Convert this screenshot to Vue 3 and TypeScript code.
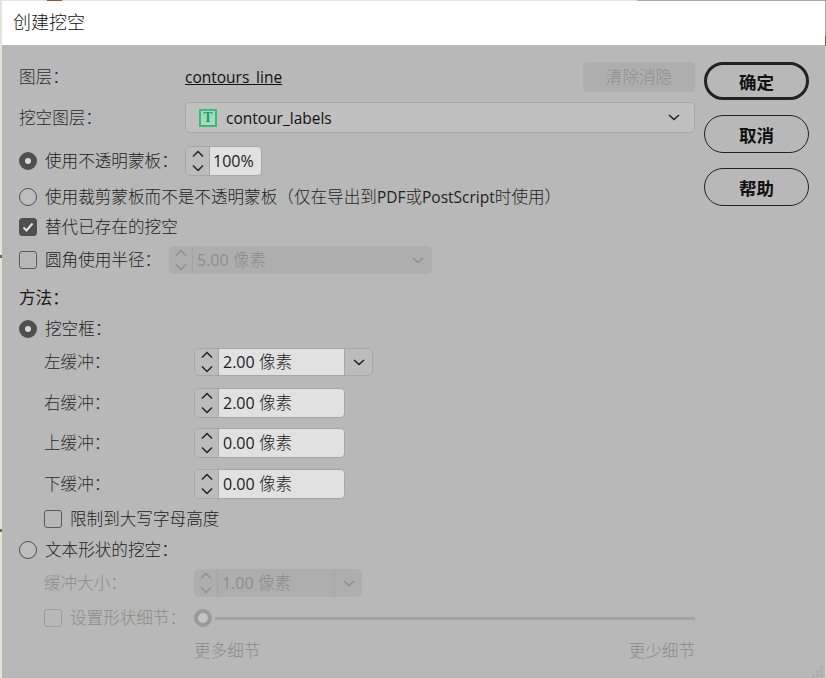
<script setup lang="ts">
const COLON = '\uFF1A'
const buffers = [
  { label: '右缓冲' + COLON, value: '2.00', cls: 'r-right' },
  { label: '上缓冲' + COLON, value: '0.00', cls: 'r-top' },
  { label: '下缓冲' + COLON, value: '0.00', cls: 'r-bottom' },
]
const gripDots = [
  [8, 0],
  [4, 4], [8, 4],
  [0, 8], [4, 8], [8, 8],
]
</script>

<template>
  <div class="screen">
    <div class="window">
      <header class="title">创建挖空</header>
      <div class="body">
        <main class="form">
          <div class="row r-layer">
            <span class="label-main">图层&#xFF1A;</span>
            <span class="layer-name latin">contours_line</span>
            <button class="clear">清除消隐</button>
          </div>
          <div class="row r-knock">
            <span class="label-main">挖空图层&#xFF1A;</span>
            <div class="combo">
              <span class="t-icon">T</span>
              <span class="combo-text latin">contour_labels</span>
              <svg class="chev combo-chev" viewBox="0 0 12 7"><path d="M1 1l5 4.500L11 1" /></svg>
            </div>
          </div>
          <div class="row r-opacity">
            <span class="radio on"></span>
            <span class="opt-label">使用不透明蒙板&#xFF1A;</span>
            <div class="spin spin-pct">
              <span class="steppers">
                <svg viewBox="0 0 14 26"><path d="M2 8.500l5-5 5 5M2 17.500l5 5 5-5" /></svg>
              </span>
              <span class="spin-value"><span class="num">100%</span></span>
            </div>
          </div>
          <div class="row r-clip">
            <span class="radio"></span>
            <span class="opt-label">使用裁剪蒙板而不是不透明蒙板&#xFF08;仅在导出到<span class="latin">PDF</span>或<span class="latin">PostScript</span>时使用&#xFF09;</span>
          </div>
          <div class="row r-replace">
            <span class="check on">
              <svg viewBox="0 0 16 16"><path d="M3.500 8.500l3 3 6-7" /></svg>
            </span>
            <span class="opt-label">替代已存在的挖空</span>
          </div>
          <div class="row r-round">
            <span class="check"></span>
            <span class="opt-label">圆角使用半径&#xFF1A;</span>
            <div class="spin spin-disabled spin-round">
              <span class="steppers">
                <svg viewBox="0 0 14 26"><path d="M2 8.500l5-5 5 5M2 17.500l5 5 5-5" /></svg>
              </span>
              <span class="spin-value"><span class="num">5.00</span> 像素</span>
              <svg class="chev disabled-chev" viewBox="0 0 12 7"><path d="M1 1l5 4.500L11 1" /></svg>
            </div>
          </div>
          <div class="row r-method"><span class="method">方法&#xFF1A;</span></div>
          <div class="row r-frame">
            <span class="radio on"></span>
            <span class="opt-label">挖空框&#xFF1A;</span>
          </div>
          <div class="row indent r-left">
            <span class="sub-label">左缓冲&#xFF1A;</span>
            <div class="spin spin-unit">
              <span class="steppers">
                <svg viewBox="0 0 14 26"><path d="M2 8.500l5-5 5 5M2 17.500l5 5 5-5" /></svg>
              </span>
              <span class="spin-value"><span class="num">2.00</span> 像素</span>
              <span class="unit-drop">
                <svg class="chev" viewBox="0 0 12 7"><path d="M1 1l5 4.500L11 1" /></svg>
              </span>
            </div>
          </div>
          <div v-for="b in buffers" :key="b.label" class="row indent" :class="b.cls">
            <span class="sub-label">{{ b.label }}</span>
            <div class="spin spin-plain">
              <span class="steppers">
                <svg viewBox="0 0 14 26"><path d="M2 8.500l5-5 5 5M2 17.500l5 5 5-5" /></svg>
              </span>
              <span class="spin-value"><span class="num">{{ b.value }}</span> 像素</span>
            </div>
          </div>
          <div class="row indent r-cap">
            <span class="check"></span>
            <span class="opt-label">限制到大写字母高度</span>
          </div>
          <div class="row r-shape">
            <span class="radio"></span>
            <span class="opt-label">文本形状的挖空&#xFF1A;</span>
          </div>
          <div class="row indent r-size">
            <span class="sub-label muted">缓冲大小&#xFF1A;</span>
            <div class="spin spin-disabled spin-size">
              <span class="steppers">
                <svg viewBox="0 0 14 26"><path d="M2 8.500l5-5 5 5M2 17.500l5 5 5-5" /></svg>
              </span>
              <span class="spin-value"><span class="num">1.00</span> 像素</span>
              <span class="unit-drop">
                <svg class="chev disabled-chev" viewBox="0 0 12 7"><path d="M1 1l5 4.500L11 1" /></svg>
              </span>
            </div>
          </div>
          <div class="row indent r-detail">
            <span class="check muted-box"></span>
            <span class="opt-label muted detail-label">设置形状细节&#xFF1A;</span>
            <div class="slider">
              <span class="thumb"></span>
              <span class="track"></span>
            </div>
          </div>
          <div class="row r-ends">
            <span>更多细节</span>
            <span>更少细节</span>
          </div>
        </main>
        <aside class="actions">
          <button class="action default">确定</button>
          <button class="action">取消</button>
          <button class="action">帮助</button>
        </aside>
        <svg class="grip" viewBox="0 0 11 11">
          <rect v-for="d in gripDots" :key="d.join()" :x="d[0]" :y="d[1]" width="3" height="3" />
        </svg>
      </div>
    </div>
  </div>
</template>

<style>
html, body { margin: 0; background: #e4e4da; }
</style>

<style scoped>
.screen {
  width: 826px;
  height: 678px;
  overflow: hidden;
  background:
    linear-gradient(to right, #e4e4da 0 47px, #8a5a2a 47px 62px, #e4e4da 62px 637px, #a8a8a8 637px) top / 100% 1px no-repeat,
    linear-gradient(to bottom, #a8a8a8 0 36px, #8a5a2a 36px 46px, #d8d8d8 46px) right / 1px 100% no-repeat,
    linear-gradient(to bottom, #e4e4da 0 255px, #8a5a2a 255px 258px, #e4e4da 258px 529px, #8a5a2a 529px 532px, #e4e4da 532px) left / 2px 100% no-repeat,
    #e4e4da;
  font-family: "Open Sans", "Noto Sans CJK SC", sans-serif;
  font-size: 16.6px;
  font-weight: 300;
  color: #222;
}
.window {
  width: 823px;
  height: 677px;
  margin: 1px 0 0 2px;
  display: flex;
  flex-direction: column;
}
.title {
  height: 44px;
  flex: none;
  background: #fff;
  padding-left: 11px;
  font-size: 18px;
  line-height: 43px;
  color: #111;
}
.body {
  flex: 1;
  display: flex;
  background: #b8b8b8;
  padding-top: 17px;
  position: relative;
}
.form {
  width: 676px;
  margin-left: 17px;
  flex: none;
  display: flex;
  flex-direction: column;
}
.latin { font-size: 15.5px; font-weight: 400; }
.num { font-size: 16px; font-weight: 400; }
.row { display: flex; align-items: center; flex: none; line-height: 22px; }
.indent { padding-left: 25px; }
.label-main { width: 166px; flex: none; color: #2b2b2b; }
.r-layer { height: 30px; }
.r-knock { height: 31px; margin-top: 10px; }
.r-opacity { height: 30px; margin-top: 13px; }
.r-clip { height: 30px; margin-top: 6px; }
.r-replace { height: 30px; }
.r-round { height: 28px; margin-top: 4px; }
.r-method { height: 24px; margin-top: 12px; }
.r-frame { height: 24px; margin-top: 7px; }
.r-left { height: 28px; margin-top: 7px; }
.r-right { height: 30px; margin-top: 12px; }
.r-top { height: 30px; margin-top: 10px; }
.r-bottom { height: 30px; margin-top: 11px; }
.r-cap { height: 24px; margin-top: 8px; }
.r-shape { height: 24px; margin-top: 7px; }
.r-size { height: 28px; margin-top: 7px; }
.r-detail { height: 28px; margin-top: 7px; }
.r-ends { height: 24px; margin-top: 7px; padding-left: 175px; justify-content: space-between; color: #8c8c8c; }

.method { color: #1a1a1a; font-weight: 400; }
.layer-name { text-decoration: underline; color: #111; }
.clear {
  margin-left: auto;
  width: 112px;
  height: 30px;
  border: 0;
  border-radius: 4px;
  background: #aeaeae;
  color: #8e8e8e;
  font: inherit;
  padding: 0;
}
.combo {
  flex: 1;
  height: 31px;
  box-sizing: border-box;
  border: 1px solid #a6a6a6;
  border-radius: 5px;
  background: #c0c0c0;
  display: flex;
  align-items: center;
  padding: 0 14px 0 13px;
  color: #111;
}
.t-icon {
  width: 18px;
  height: 18px;
  box-sizing: border-box;
  border: 2px solid #3cb878;
  background: #a5dcc0;
  color: #1f9e62;
  font: 700 14px/14px "Liberation Serif", serif;
  text-align: center;
  flex: none;
}
.combo-text { margin-left: 9px; }
.combo-chev { margin-left: auto; }
.chev { width: 12px; height: 7px; flex: none; fill: none; stroke: #222; stroke-width: 1.6; }
.disabled-chev { stroke: #8e8e8e; }

.radio {
  width: 18px;
  height: 18px;
  box-sizing: border-box;
  border: 1.500px solid #4f4f4f;
  border-radius: 50%;
  flex: none;
  margin-right: 8px;
  background: #bdbdbd;
}
.radio.on { background: #d8d8d8; border: 6px solid #4f4f4f; }
.check {
  width: 18px;
  height: 18px;
  box-sizing: border-box;
  border: 1px solid #5a5a5a;
  border-radius: 3px;
  flex: none;
  margin-right: 8px;
}
.check.on { background: #4f4f4f; border-color: #4f4f4f; }
.check svg { display: block; width: 16px; height: 16px; fill: none; stroke: #e4e4e4; stroke-width: 2; }
.muted-box { border-color: #9c9c9c; }
.opt-label { color: #222; white-space: nowrap; }
.r-opacity .opt-label { width: 140px; flex: none; }
.r-round .opt-label { width: 124px; flex: none; }
.sub-label { width: 150px; flex: none; color: #2b2b2b; }
.muted { color: #8c8c8c; }
.detail-label { width: 124px; flex: none; }

.spin {
  display: flex;
  align-items: stretch;
  height: 30px;
  box-sizing: border-box;
  border: 1px solid #a6a6a6;
  border-radius: 5px;
  overflow: hidden;
}
.steppers {
  width: 23px;
  flex: none;
  border-right: 1px solid #a6a6a6;
  background: #bcbcbc;
  display: flex;
  align-items: center;
  justify-content: center;
}
.steppers svg { width: 14px; height: 26px; fill: none; stroke: #222; stroke-width: 1.5; }
.spin-value { flex: 1; background: #e1e1e1; padding-left: 4px; line-height: 28px; color: #1c1c1c; }
.spin-pct { width: 77px; }
.spin-pct .spin-value { padding-left: 3px; }
.spin-plain { width: 151px; }
.spin-unit { width: 179px; height: 28px; }
.spin-unit .spin-value { line-height: 26px; }
.unit-drop {
  width: 27px;
  flex: none;
  border-left: 1px solid #a6a6a6;
  background: #bcbcbc;
  display: flex;
  align-items: center;
  justify-content: center;
}
.spin-disabled { border: 0; background: #aeaeae; height: 28px; }
.spin-disabled .steppers { background: transparent; border-right-color: #a2a2a2; }
.spin-disabled .steppers svg { stroke: #8e8e8e; }
.spin-disabled .spin-value { background: transparent; color: #8c8c8c; line-height: 28px; }
.spin-disabled .unit-drop { background: transparent; border-left-color: #a6a6a6; }
.spin-round { width: 263px; }
.spin-round .disabled-chev { align-self: center; margin-right: 8px; }
.spin-size { width: 168px; }

.slider { flex: 1; display: flex; align-items: center; }
.thumb {
  width: 18px;
  height: 18px;
  box-sizing: border-box;
  border: 4px solid #9a9a9a;
  border-radius: 50%;
  background: #c4c4c4;
  flex: none;
}
.track { flex: 1; height: 3px; margin-left: 3px; background: #a3a3a3; }

.actions {
  margin-left: 9px;
  width: 105px;
  display: flex;
  flex-direction: column;
  gap: 15px;
}
.action {
  width: 105px;
  height: 38px;
  box-sizing: border-box;
  border: 1.500px solid #222;
  border-radius: 19px;
  background: transparent;
  font: inherit;
  font-size: 17.5px;
  font-weight: 700;
  color: #111;
  padding: 0;
}
.action.default { border-width: 3px; }
.grip {
  position: absolute;
  right: 2px;
  bottom: 1px;
  width: 11px;
  height: 11px;
  fill: #adadad;
}
</style>
